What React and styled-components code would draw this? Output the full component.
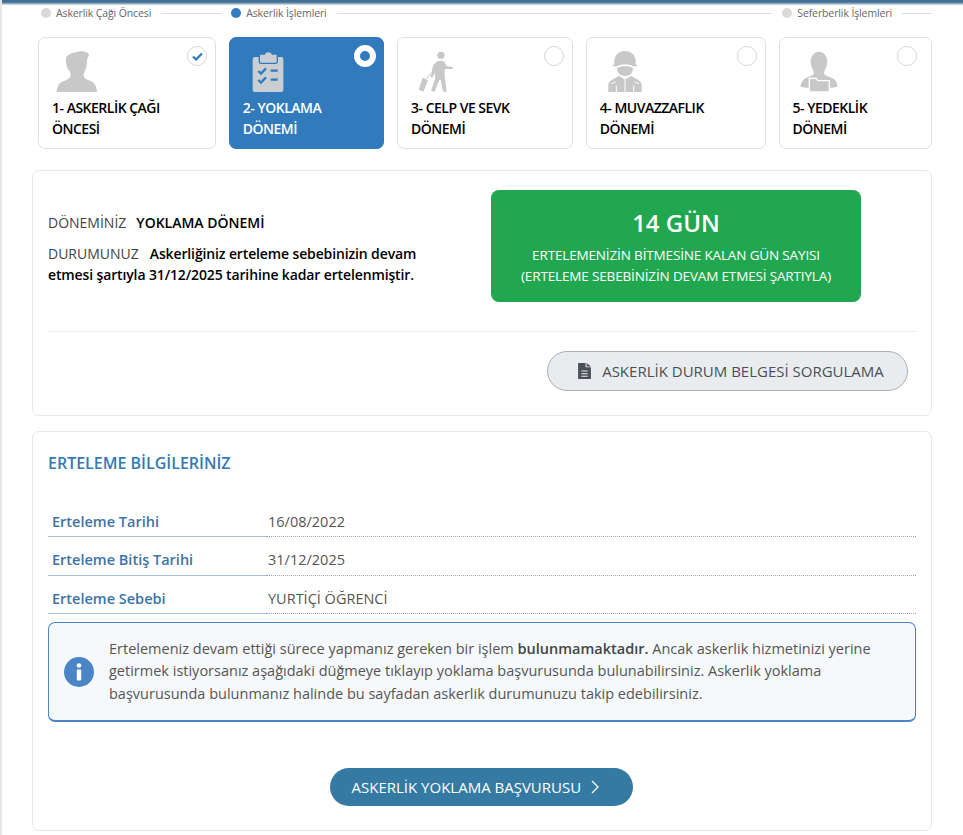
import React from 'react';
import styled, { createGlobalStyle } from 'styled-components';

const Global = createGlobalStyle`
  html, body { margin: 0; padding: 0; background: #fff; }
  body { font-family: "Open Sans", "Noto Sans", sans-serif; color: #4a4a4a; width: 963px; height: 835px; overflow: hidden; }
  * { box-sizing: border-box; }
`;

const Page = styled.div`
  width: 963px;
  height: 835px;
  overflow: hidden;
  border-left: 2px solid #e6e6e6;
`;
const TopBar = styled.div`
  height: 5px;
  margin-left: -2px;
  background: linear-gradient(#3f6f96 0 2px, #6f93ad 3px, #dfe6ea 5px);
`;
const Content = styled.div`
  padding: 0 31px 0 30px;
`;
const Timeline = styled.div`
  display: flex;
  align-items: center;
  height: 16px;
  margin: 0 0 0 9px;
`;
const Step = styled.div`
  display: flex;
  align-items: center;
  gap: 5px;
  font-size: 10.5px;
  letter-spacing: -0.12px;
  color: #666;
  white-space: nowrap;
`;
const Dot = styled.span`
  width: 10px;
  height: 10px;
  border-radius: 50%;
  background: ${p => (p.$on ? '#317ec0' : '#d9d9d9')};
`;
const Line = styled.span`
  height: 1px;
  background: #dcdcdc;
  margin: 0 ${p => p.$r ?? 8}px 0 ${p => p.$l ?? 10}px;
  flex: ${p => (p.$w ? `0 0 ${p.$w}px` : '1')};
`;
const Cards = styled.div`
  display: grid;
  grid-template-columns: 178px 155.5px 176px 180px 153px;
  column-gap: 12.75px;
  margin: 16px 0 21px 6px;
  width: 894px;
`;
const Card = styled.div`
  position: relative;
  height: 112px;
  border: 1px solid ${p => (p.$active ? '#317bbd' : '#dfdfdf')};
  border-radius: 7px;
  background: ${p => (p.$active ? '#317bbd' : '#fff')};
  padding: 13px 0 0 13px;
  color: ${p => (p.$active ? '#fff' : '#000')};
`;
const CardIcon = styled.svg`
  display: block;
  width: 60px;
  height: 50px;
  margin: -6px 0 0 ${p => p.$x || 0}px;
  fill: ${p => (p.$active ? '#c9ced3' : '#c8c8c8')};
`;
const CardTitle = styled.div`
  font-size: 14px;
  font-weight: 600;
  line-height: 21px;
  letter-spacing: -0.5px;
  margin-top: 2px;
`;
const Radio = styled.span`
  position: absolute;
  top: 8px;
  right: ${p => p.$r || 8}px;
  width: 20px;
  height: 20px;
  border-radius: 50%;
  border: 1px solid #d8d8d8;
  background: #fff;
  display: flex;
  align-items: center;
  justify-content: center;
`;
const RadioActive = styled.span`
  position: absolute;
  top: 7px;
  right: 7px;
  width: 22px;
  height: 22px;
  border-radius: 50%;
  border: 6px solid #fff;
  background: #317bbd;
`;
const Panel = styled.section`
  border: 1px solid #e8e8e8;
  border-radius: 7px;
  background: #fff;
  margin-bottom: ${p => p.$mb ?? 15}px;
  padding: ${p => p.$pad};
`;
const StatusRow = styled.div`
  display: flex;
  align-items: flex-start;
  height: 161px;
  border-bottom: 1px solid #ececec;
`;
const StatusText = styled.div`
  width: 380px;
  margin-right: 63px;
  padding-top: 41px;
  font-size: 14px;
  line-height: 21px;
`;
const StatusLine = styled.p`
  margin: 0 0 10px;
  color: #000;
  font-weight: 600;
  letter-spacing: ${p => (p.$tight ? '-0.13px' : '0')};
`;
const Caption = styled.span`
  font-weight: 400;
  color: #444;
  letter-spacing: 0;
  margin-right: ${p => p.$m}px;
`;
const Counter = styled.div`
  width: 370px;
  height: 112px;
  margin-top: 19px;
  border-radius: 8px;
  background: #21a750;
  color: #fff;
  text-align: center;
  padding-top: 16px;
`;
const Days = styled.div`
  font-size: 24px;
  font-weight: 600;
  line-height: 34px;
  margin-bottom: 5px;
`;
const CounterNote = styled.div`
  font-size: 13.5px;
  line-height: 21px;
  letter-spacing: -0.15px;
  white-space: nowrap;
`;
const Actions = styled.div`
  display: flex;
  justify-content: flex-end;
  padding: 19px 8px 24px 0;
`;
const DocButton = styled.button`
  display: flex;
  align-items: center;
  justify-content: center;
  gap: 11px;
  width: 361px;
  height: 40px;
  border: 1px solid #abafb3;
  border-radius: 20px;
  background: #e9ecef;
  color: #495057;
  font: 400 15px "Open Sans", sans-serif;
  padding: 0 0 0 7px;
`;
const SectionTitle = styled.h2`
  margin: 0 0 30px;
  font-size: 16px;
  line-height: 22px;
  font-weight: 600;
  color: #3479b5;
`;
const InfoRow = styled.div`
  display: grid;
  grid-template-columns: 218px 1fr;
  height: ${p => p.$h}px;
  font-size: 14.5px;
  line-height: 20px;
`;
const InfoLabel = styled.div`
  display: flex;
  align-items: flex-end;
  padding: 0 0 ${p => p.$b ?? 4}px 4px;
  border-bottom: 1px solid #a3bfdc;
  font-weight: 600;
  color: #3d74a6;
`;
const InfoValue = styled.div`
  display: flex;
  align-items: flex-end;
  padding: 0 0 ${p => p.$b ?? 4}px 2px;
  border-bottom: 1px dotted #9aa5ad;
  color: #555;
`;
const Notice = styled.div`
  display: flex;
  align-items: center;
  height: 100px;
  margin-top: 8px;
  border: 1px solid #4a86c7;
  border-bottom-width: 2px;
  border-radius: 7px;
  background: #f5f9fc;
  padding: 0 30px 0 15px;
`;
const NoticeText = styled.p`
  margin: 0 0 0 15px;
  font-size: 14.5px;
  line-height: 22.5px;
  color: #555;
  b { font-weight: 600; color: #444; }
`;
const Apply = styled.div`
  display: flex;
  justify-content: center;
  margin-top: 46px;
  padding-right: 2px;
`;
const ApplyButton = styled.button`
  display: flex;
  align-items: center;
  gap: 9px;
  width: 303px;
  height: 38px;
  padding: 0 0 0 22px;
  border: 0;
  border-radius: 19px;
  background: #357aa3;
  color: #fff;
  font: 400 15px "Open Sans", sans-serif;
  white-space: nowrap;
`;
const NoticeIcon = styled.svg`
  flex: none;
`;

const Person = () => (
  <path d="M48 38C52 28 70 22 85 20C98 17 112 20 116 28C118 34 112 38 111 44C112 56 108 72 104 80L100 90C102 100 110 104 122 108C134 112 140 125 141 141L20 141C21 124 28 112 42 108C54 104 62 98 62 90L60 80C52 74 50 64 48 52Z" />
);
const Clipboard = () => (
  <>
    <path d="M30 36H114a6 6 0 0 1 6 6V135a6 6 0 0 1-6 6H30a6 6 0 0 1-6-6V42a6 6 0 0 1 6-6z" transform="scale(0.96 1)" />
    <path d="M46 27H58C60 17 80 17 82 27H94a3 3 0 0 1 3 3V50a5 5 0 0 1-5 5H48a5 5 0 0 1-5-5V30a3 3 0 0 1 3-3z" stroke="#317bbd" strokeWidth="4" />
    <path d="M40 78l8 8 15-16M40 105l8 8 15-16" fill="none" stroke="#317bbd" strokeWidth="7" />
    <path d="M77 77h21M77 104h21" fill="none" stroke="#317bbd" strokeWidth="7" />
  </>
);
const Traveler = () => (
  <>
    <circle cx="93" cy="31" r="11" />
    <path d="M78 52C84 46 100 46 104 52L110 64L128 66L128 72L104 72L104 92L110 140L99 140L92 104L88 104L74 140L63 137L76 100L74 84L67 98L61 95L70 60Z" />
    <path d="M38 98L54 106L40 140L26 134Z" />
    <path d="M50 102L60 86" fill="none" stroke="#c8c8c8" strokeWidth="3" />
  </>
);
const Soldier = () => (
  <>
    <path d="M58 56C56 32 70 18 90 18C110 18 124 32 122 56L128 64H114C106 57 74 57 66 64H52Z" />
    <path d="M66 69C74 62 106 62 114 69C114 84 104 93 90 93C76 93 66 84 66 69Z" />
    <path d="M40 141V118C42 108 52 104 66 96L72 92L90 104L108 92L114 96C128 104 138 108 140 118V141Z" />
    <path d="M90 106V141M64 122V141M116 122V141M48 116L62 110M132 116L118 110" fill="none" stroke="#fff" strokeWidth="3" />
  </>
);
const Reservist = () => (
  <>
    <path d="M87 20C102 20 112 34 112 50C112 64 104 74 102 84C104 92 114 94 124 98C136 102 142 112 142 125L126 128H48L32 125C32 112 40 102 50 98C60 94 70 92 72 84C70 74 62 64 62 50C62 34 72 20 87 20Z" />
    <path d="M58 141V100H78L84 107H118V141Z" stroke="#fff" strokeWidth="4" />
  </>
);

const DocIcon = () => (
  <svg width="13" height="16" viewBox="0 0 12 15" fill="#495057">
    <path fillRule="evenodd" d="M0 0h7v4h5v11H0zM8 0l4 3.300H8zM3 7v1h6V7zm0 2.500v1h6v-1zM3 12v1h6v-1z" />
  </svg>
);

export default function App() {
  return (
    <Page>
      <Global />
      <TopBar />
      <Content>
        <Timeline>
          <Step><Dot />Askerlik Çağı Öncesi</Step>
          <Line $w={61} $l={10} $r={9} />
          <Step><Dot $on />Askerlik İşlemleri</Step>
          <Line $l={10} $r={10} />
          <Step><Dot />Seferberlik İşlemleri</Step>
          <Line $w={30} $l={10} $r={0} />
        </Timeline>
        <Cards>
          <Card>
            <CardIcon viewBox="0 0 180 150" $x={-2}><Person /></CardIcon>
            <CardTitle>1- ASKERLİK ÇAĞI<br />ÖNCESİ</CardTitle>
            <Radio>
              <svg width="11" height="9" viewBox="0 0 11 9"><path d="M1 4.500l3 3 6-6" fill="none" stroke="#317bbd" strokeWidth="2.200" /></svg>
            </Radio>
          </Card>
          <Card $active>
            <CardIcon viewBox="0 0 180 150" $active $x={2}><Clipboard /></CardIcon>
            <CardTitle>2- YOKLAMA<br />DÖNEMİ</CardTitle>
            <RadioActive />
          </Card>
          <Card>
            <CardIcon viewBox="0 0 180 150" $x={-1}><Traveler /></CardIcon>
            <CardTitle>3- CELP VE SEVK<br />DÖNEMİ</CardTitle>
            <Radio />
          </Card>
          <Card>
            <CardIcon viewBox="0 0 180 150" $x={-5}><Soldier /></CardIcon>
            <CardTitle>4- MUVAZZAFLIK<br />DÖNEMİ</CardTitle>
            <Radio />
          </Card>
          <Card>
            <CardIcon viewBox="0 0 180 150" $x={-3}><Reservist /></CardIcon>
            <CardTitle>5- YEDEKLİK<br />DÖNEMİ</CardTitle>
            <Radio $r={14} />
          </Card>
        </Cards>

        <Panel $pad="0 15px">
          <StatusRow>
            <StatusText>
              <StatusLine><Caption $m={10}>DÖNEMİNİZ</Caption>YOKLAMA DÖNEMİ</StatusLine>
              <StatusLine $tight><Caption $m={11}>DURUMUNUZ</Caption>Askerliğiniz erteleme sebebinizin devam etmesi şartıyla 31/12/2025 tarihine kadar ertelenmiştir.</StatusLine>
            </StatusText>
            <Counter>
              <Days>14 GÜN</Days>
              <CounterNote>ERTELEMENİZİN BİTMESİNE KALAN GÜN SAYISI<br />(ERTELEME SEBEBİNİZİN DEVAM ETMESİ ŞARTIYLA)</CounterNote>
            </Counter>
          </StatusRow>
          <Actions>
            <DocButton><DocIcon />ASKERLİK DURUM BELGESİ SORGULAMA</DocButton>
          </Actions>
        </Panel>

        <Panel $pad="20px 15px 24px" $mb={0}>
          <SectionTitle>ERTELEME BİLGİLERİNİZ</SectionTitle>
          <InfoRow $h={33}><InfoLabel>Erteleme Tarihi</InfoLabel><InfoValue>16/08/2022</InfoValue></InfoRow>
          <InfoRow $h={39}><InfoLabel $b={5}>Erteleme Bitiş Tarihi</InfoLabel><InfoValue $b={5}>31/12/2025</InfoValue></InfoRow>
          <InfoRow $h={38}><InfoLabel>Erteleme Sebebi</InfoLabel><InfoValue>YURTİÇİ ÖĞRENCİ</InfoValue></InfoRow>
          <Notice>
            <NoticeIcon width="30" height="30" viewBox="0 0 30 30">
              <circle cx="15" cy="15" r="15" fill="#4a86c7" />
              <circle cx="15" cy="8.500" r="2.300" fill="#fff" />
              <rect x="12.800" y="12.500" width="4.400" height="11" rx="1" fill="#fff" />
            </NoticeIcon>
            <NoticeText>
              Ertelemeniz devam ettiği sürece yapmanız gereken bir işlem <b>bulunmamaktadır.</b> Ancak askerlik hizmetinizi yerine getirmek istiyorsanız aşağıdaki düğmeye tıklayıp yoklama başvurusunda bulunabilirsiniz. Askerlik yoklama başvurusunda bulunmanız halinde bu sayfadan askerlik durumunuzu takip edebilirsiniz.
            </NoticeText>
          </Notice>
          <Apply>
            <ApplyButton>
              ASKERLİK YOKLAMA BAŞVURUSU
              <svg width="10" height="14" viewBox="0 0 10 14"><path d="M2 1l6 6-6 6" fill="none" stroke="#fff" strokeWidth="1.300" /></svg>
            </ApplyButton>
          </Apply>
        </Panel>
      </Content>
    </Page>
  );
}
